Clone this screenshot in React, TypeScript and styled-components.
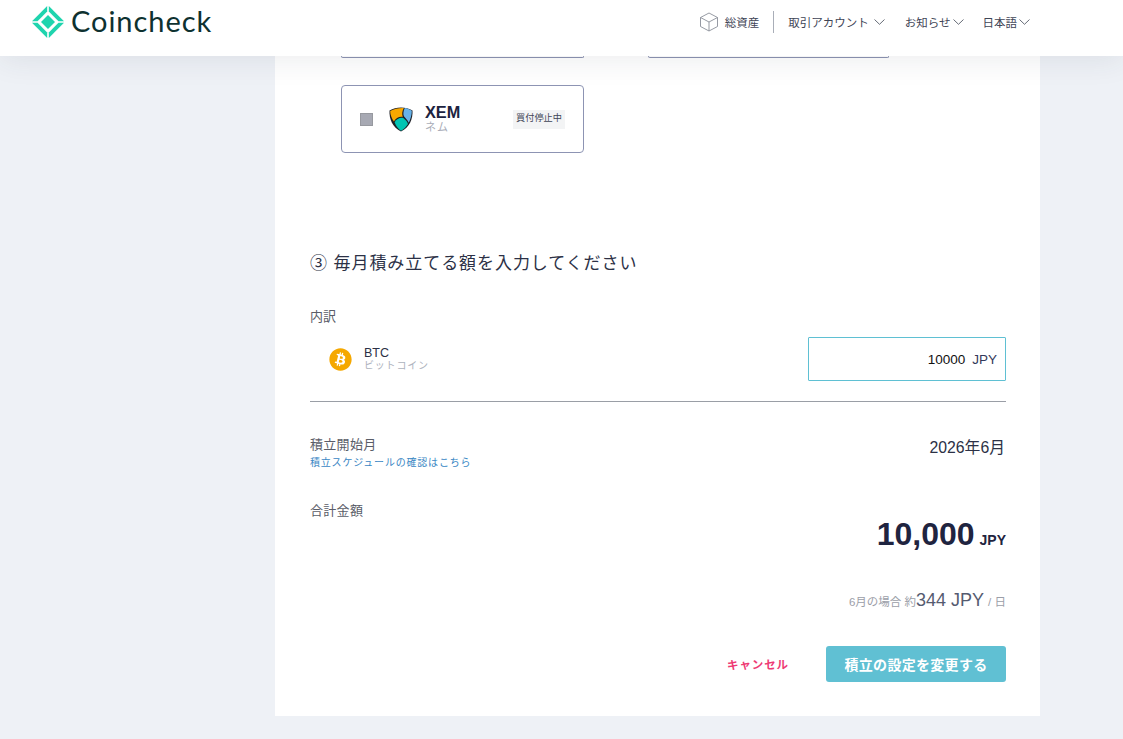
import React from 'react';
import styled, { createGlobalStyle } from 'styled-components';
import { FaBitcoin } from 'react-icons/fa';

const GlobalStyle = createGlobalStyle`
  html, body {
    margin: 0;
    padding: 0;
    background: #eef1f6;
    overflow: hidden;
    font-family: "Liberation Sans", "Noto Sans CJK JP", sans-serif;
    color: #1f2440;
  }
`;

const Page = styled.div`
  width: 1123px;
  height: 739px;
  overflow: hidden;
`;

const Header = styled.header`
  position: relative;
  z-index: 2;
  height: 56px;
  display: flex;
  align-items: flex-start;
  justify-content: space-between;
  background: #fff;
  box-shadow: 0 4px 30px rgba(40, 50, 70, 0.09);
`;

const Brand = styled.div`
  display: flex;
  align-items: center;
  gap: 7px;
  margin: 6px 0 0 32px;
`;

const BrandName = styled.span`
  font-family: Lato, sans-serif;
  font-size: 29px;
  line-height: 30px;
  padding-bottom: 2px;
  letter-spacing: 0.95px;
  color: #0e3130;
`;

const Nav = styled.nav`
  display: flex;
  align-items: center;
  height: 22px;
  margin: 11px 93px 0 0;
  font-size: 11.5px;
  color: #3f4556;
`;

const NavItem = styled.span<{ $gap: number; $left: number }>`
  display: flex;
  align-items: center;
  gap: ${p => p.$gap}px;
  margin-left: ${p => p.$left}px;
`;

const AssetsLink = styled.span`
  display: flex;
  align-items: center;
  gap: 6px;
  padding-right: 14px;
  height: 22px;
  border-right: 1px solid #a9aeb8;
`;

const Main = styled.main`
  width: 765px;
  height: 660px;
  margin-left: 275px;
  padding: 0 34px 0 35px;
  box-sizing: border-box;
  background: #fff;
`;

const CardGrid = styled.div`
  display: grid;
  grid-template-columns: 243px 241px;
  column-gap: 64px;
  margin-left: 31px;
`;

const CutCard = styled.div`
  height: 2px;
  box-sizing: border-box;
  border: 1px solid #8d94b3;
  border-top: 0;
  border-radius: 0 0 4px 4px;
`;

const CoinCard = styled.div`
  grid-column: 1;
  height: 68px;
  margin-top: 27px;
  box-sizing: border-box;
  display: flex;
  align-items: center;
  padding: 0 18px;
  border: 1px solid #8d94b3;
  border-radius: 4px;
`;

const CheckBox = styled.span`
  width: 13px;
  height: 13px;
  flex: none;
  box-sizing: border-box;
  background: #a7a9b3;
  border: 1px solid #97999f;
  margin-right: 16px;
`;

const CoinText = styled.div`
  display: flex;
  flex-direction: column;
  margin-left: 12px;
  padding-bottom: 2px;
  flex: 1;
`;

const CoinSymbol = styled.span`
  font-size: 16.3px;
  font-weight: 700;
  line-height: 18px;
  color: #1c2340;
`;

const CoinName = styled.span`
  font-size: 11px;
  line-height: 12px;
  letter-spacing: 1px;
  color: #a9adb8;
`;

const StopBadge = styled.span`
  padding: 0 3px;
  height: 19px;
  line-height: 17px;
  font-size: 9.2px;
  color: #3f4556;
  background: #f3f4f5;
`;

const SectionTitle = styled.h2`
  margin: 99px 0 0;
  font-size: 17px;
  line-height: 24px;
  font-weight: 400;
  letter-spacing: 0.93px;
  color: #2c3146;
`;

const FieldLabel = styled.div`
  font-size: 13px;
  line-height: 18px;
  letter-spacing: 0.3px;
  color: #5a5d68;
`;

const BreakdownLabel = styled(FieldLabel)`
  margin-top: 32px;
  letter-spacing: 0;
`;

const BreakdownRow = styled.div`
  display: flex;
  align-items: center;
  justify-content: space-between;
  margin-top: 11px;
  padding: 0 0 20px 19px;
  border-bottom: 1px solid #9a9ea6;
`;

const CoinInfo = styled.div`
  display: flex;
  align-items: center;
  gap: 12px;
`;

const CoinStack = styled.div`
  display: flex;
  flex-direction: column;
`;

const BtcSymbol = styled.span`
  font-size: 12.5px;
  line-height: 14px;
  color: #2c3146;
`;

const BtcName = styled.span`
  font-size: 10px;
  line-height: 12px;
  letter-spacing: 0.8px;
  color: #adb2bd;
`;

const AmountBox = styled.div`
  width: 198px;
  height: 44px;
  box-sizing: border-box;
  display: flex;
  align-items: center;
  justify-content: flex-end;
  gap: 7px;
  padding-right: 8px;
  border: 1px solid #5fc0d3;
  border-radius: 1px;
  font-size: 13.5px;
`;

const AmountValue = styled.span`
  color: #111;
`;

const AmountUnit = styled.span`
  color: #33395a;
`;

const StartRow = styled.div`
  display: flex;
  justify-content: space-between;
  margin-top: 34px;
`;

const ScheduleLink = styled.a`
  display: block;
  margin-top: 2px;
  font-size: 10px;
  line-height: 14px;
  letter-spacing: 0.8px;
  color: #3a87c4;
`;

const StartValue = styled.span`
  font-size: 15.8px;
  line-height: 22px;
  margin: 1px 1px 0 0;
  color: #2c3146;
`;

const TotalLabel = styled(FieldLabel)`
  margin-top: 32px;
`;

const TotalAmount = styled.div`
  display: flex;
  justify-content: flex-end;
  align-items: baseline;
  gap: 5px;
  margin-top: -5px;
  font-weight: 700;
  color: #1f2440;
`;

const TotalValue = styled.span`
  font-size: 32px;
  line-height: 38px;
`;

const TotalUnit = styled.span`
  font-size: 14px;
`;

const DailyRow = styled.div`
  display: flex;
  justify-content: flex-end;
  align-items: baseline;
  margin-top: 35px;
  font-size: 11.5px;
  color: #9b9ea8;
`;

const DailyValue = styled.span`
  font-size: 18px;
  line-height: 24px;
  margin-right: 4px;
  color: #555b70;
`;

const Actions = styled.div`
  display: flex;
  justify-content: flex-end;
  align-items: center;
  gap: 37px;
  margin-top: 34px;
`;

const CancelLink = styled.a`
  font-size: 11.5px;
  font-weight: 700;
  letter-spacing: 0.9px;
  color: #ee3a74;
`;

const SubmitButton = styled.button`
  width: 180px;
  height: 36px;
  padding: 0;
  border: 0;
  border-radius: 3px;
  background: #60c0d3;
  color: #fff;
  font-family: inherit;
  font-size: 14px;
  font-weight: 700;
  letter-spacing: 0.3px;
`;

const Chevron = () => (
  <svg width="11" height="6" viewBox="0 0 11 6" fill="none" stroke="#555b68" strokeWidth="0.9">
    <path d="M0.5 0.5 5.5 5.3 10.5 0.5" />
  </svg>
);

const Logo = () => (
  <svg width="32" height="32" viewBox="0 0 32 32" fill="#1fd4ae">
    <path d="M15.2 0V5.5L5.5 15.2H0Z" />
    <path d="M16.8 0V5.5L26.5 15.2H32Z" />
    <path d="M15.2 32V26.5L5.5 16.8H0Z" />
    <path d="M16.8 32V26.5L26.5 16.8H32Z" />
    <path d="M16 9 23 16 16 23 9 16Z" />
  </svg>
);

const BoxIcon = () => (
  <svg width="20" height="20" viewBox="0 0 20 20" fill="none" stroke="#8a8f99" strokeWidth="0.9">
    <path d="M10 1 18.5 5.5V14.5L10 19 1.5 14.5V5.5Z" />
    <path d="M1.5 5.5 10 10 18.5 5.5M10 10V19" />
  </svg>
);

const XemIcon = () => (
  <svg width="24" height="26" viewBox="0 0 24 26">
    <path d="M.5 4.5C7 .5 17 .5 23.5 4.5 24 13 20.5 21.5 12 25.5 3.5 21.5 0 13 .5 4.5Z" fill="#1d1f25" />
    <path d="M1.2 5C5 2.7 10 1.7 14.8 1.9 13 5 12.8 8.5 13.8 10.8 10 10.2 6.8 12 4.9 15.5 2.5 12 1.2 8.5 1.2 5Z" fill="#f7a800" />
    <path d="M15.8 2C18.2 2.3 20.8 3.4 22.8 4.8 22.8 9 21.5 13.5 19.8 16.8 18.5 14 16.500 12 15.100 10.500 13.900 8.500 14.300 5 15.800 2Z" fill="#67b2e8" />
    <path d="M5.6 16.3C7.5 13 11 11.3 14.3 12 16 13.400 18.200 15.300 19 18 17 21 14.800 23.300 12 24.800 9.200 23.300 7 20 5.600 16.300Z" fill="#00c4b3" />
  </svg>
);

const App: React.FC = () => {
  return (
    <Page>
      <GlobalStyle />
      <Header>
        <Brand>
          <Logo />
          <BrandName>Coincheck</BrandName>
        </Brand>
        <Nav>
          <AssetsLink>
            <BoxIcon />
            総資産
          </AssetsLink>
          <NavItem $gap={5} $left={14}>取引アカウント<Chevron /></NavItem>
          <NavItem $gap={2} $left={20}>お知らせ<Chevron /></NavItem>
          <NavItem $gap={2} $left={19}>日本語<Chevron /></NavItem>
        </Nav>
      </Header>
      <Main>
        <CardGrid>
          <CutCard />
          <CutCard />
          <CoinCard>
            <CheckBox />
            <XemIcon />
            <CoinText>
              <CoinSymbol>XEM</CoinSymbol>
              <CoinName>ネム</CoinName>
            </CoinText>
            <StopBadge>買付停止中</StopBadge>
          </CoinCard>
        </CardGrid>

        <SectionTitle>③ 毎月積み立てる額を入力してください</SectionTitle>

        <BreakdownLabel>内訳</BreakdownLabel>
        <BreakdownRow>
          <CoinInfo>
            <FaBitcoin size={23} color="#f5a800" />
            <CoinStack>
              <BtcSymbol>BTC</BtcSymbol>
              <BtcName>ビットコイン</BtcName>
            </CoinStack>
          </CoinInfo>
          <AmountBox>
            <AmountValue>10000</AmountValue>
            <AmountUnit>JPY</AmountUnit>
          </AmountBox>
        </BreakdownRow>

        <StartRow>
          <div>
            <FieldLabel>積立開始月</FieldLabel>
            <ScheduleLink>積立スケジュールの確認はこちら</ScheduleLink>
          </div>
          <StartValue>2026年6月</StartValue>
        </StartRow>

        <TotalLabel>合計金額</TotalLabel>
        <TotalAmount>
          <TotalValue>10,000</TotalValue>
          <TotalUnit>JPY</TotalUnit>
        </TotalAmount>

        <DailyRow>
          6月の場合 約<DailyValue>344 JPY</DailyValue>/ 日
        </DailyRow>

        <Actions>
          <CancelLink>キャンセル</CancelLink>
          <SubmitButton>積立の設定を変更する</SubmitButton>
        </Actions>
      </Main>
    </Page>
  );
};

export default App;
